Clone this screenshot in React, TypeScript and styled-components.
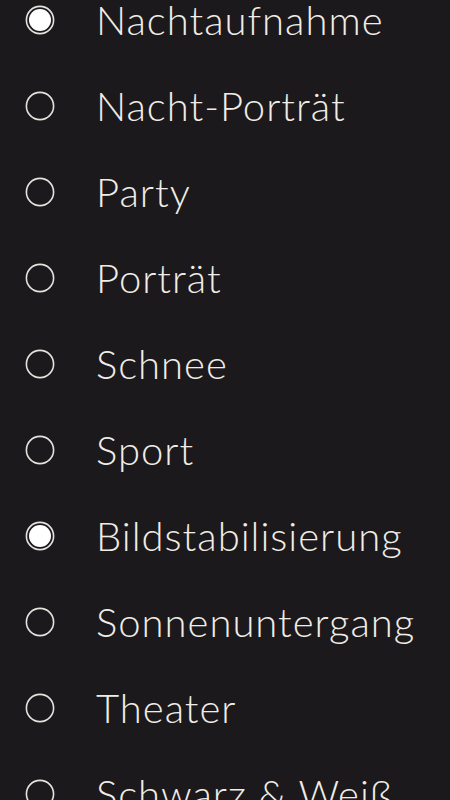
import React from "react";
import styled, { createGlobalStyle } from "styled-components";

const Global = createGlobalStyle`
  html, body {
    margin: 0;
    padding: 0;
    background: #1b191c;
    overflow: hidden;
  }
  body {
    font-family: Lato, "Open Sans", sans-serif;
  }
`;

const Screen = styled.div`
  width: 450px;
  height: 800px;
  background: #1b191c;
  overflow: hidden;
`;

const List = styled.ul`
  list-style: none;
  margin: -23px 0 0 0;
  padding: 0;
  display: flex;
  flex-direction: column;
`;

const Row = styled.li`
  height: 86px;
  display: flex;
  align-items: center;
  padding-left: 25px;
  gap: 41px;
  box-sizing: border-box;
`;

const Label = styled.span`
  font-family: Lato, sans-serif;
  font-weight: 300;
  font-size: 40px;
  letter-spacing: 1px;
  line-height: 1.2;
  color: #f1ede6;
  white-space: nowrap;
`;

const RadioSvg = styled.svg`
  flex: none;
  width: 30px;
  height: 30px;
`;

const Radio: React.FC<{ checked: boolean }> = ({ checked }) => (
  <RadioSvg viewBox="0 0 30 30">
    <circle cx="15" cy="15" r="13.6" fill="none" stroke="#e6e3de" strokeWidth="1.6" />
    {checked && <circle cx="15" cy="15" r="11" fill="#ffffff" />}
  </RadioSvg>
);

const items: { label: string; checked: boolean }[] = [
  { label: "Nachtaufnahme", checked: true },
  { label: "Nacht-Porträt", checked: false },
  { label: "Party", checked: false },
  { label: "Porträt", checked: false },
  { label: "Schnee", checked: false },
  { label: "Sport", checked: false },
  { label: "Bildstabilisierung", checked: true },
  { label: "Sonnenuntergang", checked: false },
  { label: "Theater", checked: false },
  { label: "Schwarz & Weiß", checked: false },
];

export default function App() {
  return (
    <Screen>
      <Global />
      <List>
        {items.map((it) => (
          <Row key={it.label}>
            <Radio checked={it.checked} />
            <Label>{it.label}</Label>
          </Row>
        ))}
      </List>
    </Screen>
  );
}
